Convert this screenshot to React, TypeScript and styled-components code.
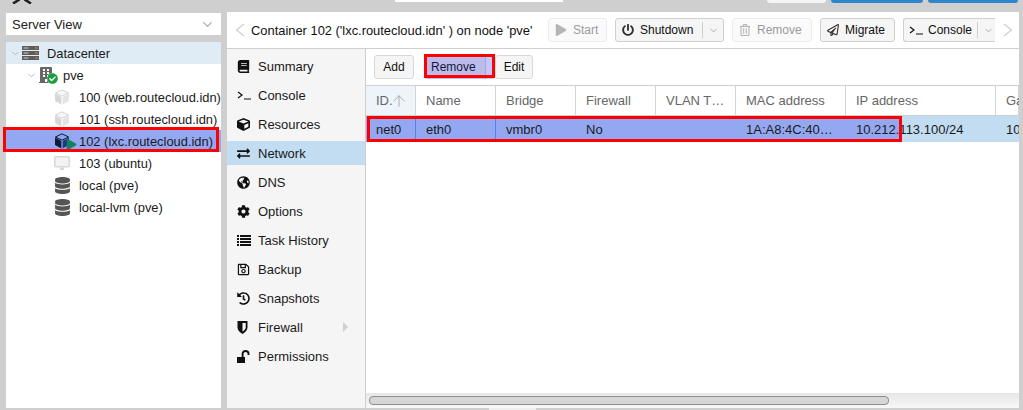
import React from 'react';
import styled, { createGlobalStyle } from 'styled-components';
import { LuChevronDown, LuArrowUp } from 'react-icons/lu';
import {
  FaBook,
  FaCube,
  FaExchangeAlt,
  FaGlobeAmericas,
  FaCog,
  FaRegSave,
  FaHistory,
  FaDatabase,
  FaPlay,
  FaCheckCircle,
  FaBuilding,
  FaRegPaperPlane,
  FaPowerOff,
  FaRegTrashAlt,
} from 'react-icons/fa';

const GlobalStyle = createGlobalStyle`
  html, body {
    margin: 0;
    height: 100%;
    background: #cfcfcf;
    overflow: hidden;
  }
  body {
    font-family: "Liberation Sans", Arial, sans-serif;
    font-size: 13px;
    color: #111;
  }
`;

const Page = styled.div`
  position: relative;
  width: 1023px;
  height: 410px;
  display: flex;
  flex-direction: column;
  overflow: hidden;
`;

const TopBar = styled.div`
  height: 13px;
  flex: none;
  display: flex;
  align-items: flex-start;
  padding-left: 12px;
  overflow: hidden;
`;

const Logo = styled.svg`
  width: 20px;
  height: 4px;
  flex: none;
`;

const SearchField = styled.div`
  width: 168px;
  height: 2px;
  margin-left: 363px;
  background: #fff;
  flex: none;
`;

const TopBtn = styled.div<{ $blue?: boolean; $w: number; $ml: number }>`
  width: ${(p) => p.$w}px;
  height: 3px;
  margin-left: ${(p) => p.$ml}px;
  flex: none;
  border-radius: 0 0 3px 3px;
  background: ${(p) => (p.$blue ? '#2b86cb' : '#f5f5f5')};
`;

const Body = styled.div`
  flex: 1;
  min-height: 0;
  display: flex;
  padding-left: 6px;
  gap: 6px;
`;

const LeftCol = styled.div`
  width: 215px;
  flex: none;
  display: flex;
  flex-direction: column;
  gap: 7px;
`;

const ViewSelect = styled.div`
  height: 22px;
  background: #fff;
  display: flex;
  align-items: center;
  justify-content: space-between;
  padding: 0 6px 0 6px;
  font-size: 13px;
  color: #222;
  svg {
    color: #aaa;
  }
`;

const Tree = styled.div`
  flex: 1;
  background: #fff;
  display: flex;
  flex-direction: column;
`;

const TreeRow = styled.div<{ $level: number; $tone?: 'hover' | 'picked' }>`
  height: 22px;
  flex: none;
  display: flex;
  align-items: center;
  padding-left: ${(p) => p.$level}px;
  white-space: nowrap;
  font-size: 12.9px;
  background: ${(p) =>
    p.$tone === 'hover' ? '#dfebf5' : p.$tone === 'picked' ? '#94a8f2' : 'transparent'};
  color: #1a1a1a;
`;

const Twist = styled.span`
  width: 12px;
  flex: none;
  display: flex;
  color: #b5b5b5;
`;

const TreeIcon = styled.span`
  width: 25px;
  height: 16px;
  flex: none;
  position: relative;
  display: flex;
  align-items: center;
`;

const Badge = styled.span<{ $color: string; $size: number; $right: number }>`
  position: absolute;
  right: ${(p) => p.$right}px;
  bottom: -1px;
  display: flex;
  font-size: ${(p) => p.$size}px;
  color: ${(p) => p.$color};
  background: #fff;
  border-radius: 50%;
`;

const PlayBadge = styled(Badge)`
  background: transparent;
  border-radius: 0;
`;

const Highlight = styled.div`
  position: absolute;
  box-sizing: border-box;
  border: 3px solid #ff0000;
  pointer-events: none;
  z-index: 3;
`;

const TreeMark = styled(Highlight)`
  left: 3px;
  top: 127px;
  width: 216px;
  height: 25px;
`;

const RemoveMark = styled(Highlight)`
  left: 424px;
  top: 54px;
  width: 71px;
  height: 24px;
`;

const RowMark = styled(Highlight)`
  left: 367px;
  top: 116px;
  width: 535px;
  height: 26px;
`;

const Main = styled.div`
  flex: 1;
  min-width: 0;
  display: flex;
  flex-direction: column;
  background: #fff;
  margin-right: 4px;
  margin-top: -1px;
`;

const Head = styled.div`
  height: 36px;
  flex: none;
  display: flex;
  align-items: center;
  border-bottom: 1px solid #cfcfcf;
  padding-left: 2px;
`;

const Arrow = styled.span<{ $w: number; $pad: number }>`
  width: ${(p) => p.$w}px;
  padding-left: ${(p) => p.$pad}px;
  box-sizing: border-box;
  flex: none;
  display: flex;
`;

const Title = styled.div`
  width: 297px;
  flex: none;
  white-space: nowrap;
  font-size: 12.9px;
  color: #111;
`;

const Actions = styled.div`
  display: flex;
  align-items: center;
  gap: 8px;
  flex: 1;
  min-width: 0;
`;

const ActionBtn = styled.div<{ $off?: boolean; $w: number; $open?: boolean }>`
  width: ${(p) => p.$w}px;
  height: 24px;
  box-sizing: border-box;
  flex: none;
  display: flex;
  align-items: center;
  gap: 5px;
  padding-left: 5px;
  overflow: hidden;
  border: 1px solid ${(p) => (p.$off ? '#ececec' : '#cfcfcf')};
  ${(p) => (p.$open ? 'border-right: none; border-radius: 3px 0 0 3px;' : 'border-radius: 3px;')}
  background: ${(p) => (p.$off ? '#fafafa' : '#f5f5f5')};
  color: ${(p) => (p.$off ? '#9a9a9a' : '#111')};
  font-size: 12px;
  white-space: nowrap;
`;

const ActionIcon = styled.span<{ $off?: boolean }>`
  width: 14px;
  flex: none;
  display: flex;
  justify-content: center;
  font-size: 12px;
  color: ${(p) => (p.$off ? '#b5b5b5' : '#333')};
`;

const Caret = styled.span`
  margin-left: auto;
  height: 16px;
  width: 21px;
  flex: none;
  box-sizing: border-box;
  border-left: 1px solid #cfcfcf;
  display: flex;
  align-items: center;
  justify-content: center;
  color: #aaa;
`;

const Content = styled.div`
  flex: 1;
  min-height: 0;
  display: flex;
`;

const SideMenu = styled.div`
  width: 139px;
  box-sizing: border-box;
  flex: none;
  background: #f5f5f5;
  border-right: 1px solid #cfcfcf;
  padding-top: 5px;
`;

const MenuItem = styled.div<{ $on?: boolean }>`
  height: 24px;
  margin-bottom: 5px;
  display: flex;
  align-items: center;
  padding-left: 10px;
  position: relative;
  background: ${(p) => (p.$on ? '#c2ddf2' : 'transparent')};
  color: #1a1a1a;
  font-size: 13px;
`;

const MenuIcon = styled.span`
  width: 21px;
  flex: none;
  display: flex;
  font-size: 13px;
  color: #111;
`;

const MenuMore = styled.span`
  position: absolute;
  right: 17px;
  top: 7px;
  width: 0;
  height: 0;
  border-left: 5px solid #d0d0d0;
  border-top: 5px solid transparent;
  border-bottom: 5px solid transparent;
`;

const Panel = styled.div`
  flex: 1;
  min-width: 0;
  display: flex;
  flex-direction: column;
  overflow: hidden;
`;

const GridBar = styled.div`
  height: 37px;
  flex: none;
  display: flex;
  align-items: center;
  padding-left: 8px;
  border-bottom: 1px solid #cfcfcf;
  box-sizing: border-box;
`;

const GridBtn = styled.div<{ $w: number; $ml: number }>`
  width: ${(p) => p.$w}px;
  height: 24px;
  margin-left: ${(p) => p.$ml}px;
  flex: none;
  box-sizing: border-box;
  display: flex;
  align-items: center;
  justify-content: center;
  border: 1px solid #d8d8d8;
  border-radius: 3px;
  background: #f5f5f5;
  font-size: 12px;
  color: #111;
`;

const RemoveBtn = styled(GridBtn)`
  background: linear-gradient(
    to right,
    #bcbcea 60px,
    #a6a6d6 60px,
    #a6a6d6 61px,
    #c6c6fa 61px
  );
  justify-content: flex-start;
  padding-left: 6px;
  border-color: transparent;
  color: #14143c;
`;

const Columns = styled.div`
  height: 30px;
  flex: none;
  display: flex;
  box-sizing: border-box;
  border-bottom: 1px solid #cfcfcf;
`;

const Col = styled.div<{ $w: number; $sorted?: boolean }>`
  width: ${(p) => p.$w}px;
  flex: none;
  box-sizing: border-box;
  display: flex;
  align-items: center;
  padding-left: 10px;
  border-right: 1px solid #d4d4d4;
  background: ${(p) => (p.$sorted ? '#edf4fa' : '#fff')};
  color: #666;
  font-size: 13px;
  white-space: nowrap;
  svg {
    color: #999;
    margin-left: -3px;
    flex: none;
  }
`;

const Row = styled.div`
  height: 26px;
  flex: none;
  display: flex;
  background: linear-gradient(to right, #94a8f2 534px, #c2ddf2 534px);
`;

const Cell = styled.div<{ $w: number; $line?: boolean }>`
  width: ${(p) => p.$w}px;
  flex: none;
  box-sizing: border-box;
  display: flex;
  align-items: center;
  padding-left: 10px;
  color: #1a1a1a;
  font-size: 13px;
  white-space: nowrap;
  overflow: hidden;
  border-right: ${(p) => (p.$line ? '1px solid #5c80e0' : 'none')};
`;

const Filler = styled.div`
  flex: 1;
`;

const ScrollBar = styled.div`
  height: 15px;
  flex: none;
  background: linear-gradient(#e6e6e6, #f8f8f8);
  display: flex;
  align-items: center;
  padding-left: 3px;
`;

const Thumb = styled.div`
  width: 518px;
  height: 7px;
  border: 1px solid #8e8e8e;
  border-radius: 4px;
  background: #d6d6d6;
`;

const BottomStrip = styled.div`
  height: 2px;
  flex: none;
  padding-left: 489px;
`;

const StripTab = styled.div`
  width: 47px;
  height: 2px;
  background: #efefef;
`;

function ThinChevron({ left }: { left?: boolean }) {
  return (
    <svg width="10" height="14" viewBox="0 0 10 14" fill="none" stroke="#cbcbcb" strokeWidth="1.1">
      <path d={left ? 'M9 1L1.5 7 9 13' : 'M1 1l7.5 6L1 13'} />
    </svg>
  );
}

function ConsoleGlyph() {
  return (
    <svg width="14" height="13" viewBox="0 0 14 13" fill="none" stroke="#111" strokeWidth="1.2">
      <path d="M1 3l4 3-4 3M7 10h7" />
    </svg>
  );
}

function ListGlyph() {
  return (
    <svg width="14" height="13" viewBox="0 0 14 13" fill="#111">
      <path d="M0 1h2v2H0zM3 1h11v2H3zM0 4h2v2H0zM3 4h11v2H3zM0 7h2v2H0zM3 7h11v2H3zM0 10h2v2H0zM3 10h11v2H3z" />
    </svg>
  );
}

function ShieldGlyph() {
  return (
    <svg width="11" height="13" viewBox="0 0 11 13">
      <path d="M.5 0h10v6.5c0 3-2.5 5-5 6.5-2.5-1.5-5-3.5-5-6.5z" fill="#111" />
      <path d="M5.5 2h3.2v4.5c0 1.7-1.6 3-3.2 4z" fill="#f5f5f5" />
    </svg>
  );
}

function UnlockGlyph() {
  return (
    <svg width="13" height="13" viewBox="0 0 13 13">
      <path d="M0 7h8v6H0z" fill="#111" />
      <path d="M5.6 7V3.6C5.6 2 6.8 1 8.5 1s3 1 3 2.6V5" fill="none" stroke="#111" strokeWidth="1.9" />
    </svg>
  );
}

function ServerGlyph() {
  return (
    <svg width="17" height="14" viewBox="0 0 17 14">
      <path d="M0 0h17v4H0zM0 5h17v4H0zM0 10h17v4H0z" fill="#5c5c5c" />
      <path d="M1.5 1.5h5v1h-5zM1.5 6.5h5v1h-5zM1.5 11.5h5v1h-5z" fill="#c9c9c9" />
      <path d="M13 1.5h3v1h-3zM13 6.5h3v1h-3zM13 11.5h3v1h-3z" fill="#d08a3c" />
    </svg>
  );
}

function CubeGlyph({ dark }: { dark?: boolean }) {
  return (
    <svg width="16" height="16" viewBox="0 0 16 16">
      <path d="M1 4.6l6.4 3.4v7.5L1 12z" fill={dark ? '#0e1a3a' : '#d6d6d6'} />
      <path d="M15 4.6L8.6 8v7.5L15 12z" fill={dark ? '#1d3a80' : '#e4e4e4'} />
      <path
        d="M8 .8L14.6 4 8 7.2 1.4 4z"
        fill={dark ? '#8ea4ea' : '#f6f6f6'}
        stroke={dark ? '#0e1a3a' : '#d6d6d6'}
      />
    </svg>
  );
}

function DesktopGlyph() {
  return (
    <svg width="16" height="15" viewBox="0 0 16 15">
      <rect x="0.75" y="0.75" width="14.5" height="10" rx="1" fill="#f3f3f3" stroke="#d8d8d8" strokeWidth="1.5" />
      <path d="M6 11.5h4V14H6z" fill="#d8d8d8" />
    </svg>
  );
}

const menu = [
  ['Summary', <FaBook />],
  ['Console', <ConsoleGlyph />],
  ['Resources', <FaCube />],
  ['Network', <FaExchangeAlt />],
  ['DNS', <FaGlobeAmericas />],
  ['Options', <FaCog />],
  ['Task History', <ListGlyph />],
  ['Backup', <FaRegSave />],
  ['Snapshots', <FaHistory />],
  ['Firewall', <ShieldGlyph />],
  ['Permissions', <UnlockGlyph />],
] as const;

const columns: [string, number][] = [
  ['ID.', 50],
  ['Name', 80],
  ['Bridge', 80],
  ['Firewall', 80],
  ['VLAN T…', 80],
  ['MAC address', 110],
  ['IP address', 150],
  ['Ga', 23],
];

export default function App() {
  return (
    <Page>
      <GlobalStyle />
      <TopBar>
        <Logo viewBox="0 0 20 4">
          <path d="M1 3.5L7.5 -.5M19 3.5L12.5 -.5" stroke="#222" strokeWidth="2.6" />
        </Logo>
        <SearchField />
        <TopBtn $w={59} $ml={204} />
        <TopBtn $blue $w={92} $ml={5} />
        <TopBtn $blue $w={90} $ml={5} />
      </TopBar>
      <Body>
        <LeftCol>
          <ViewSelect>
            Server View
            <LuChevronDown size={15} />
          </ViewSelect>
          <Tree>
            <TreeRow $level={4} $tone="hover">
              <Twist>
                <LuChevronDown size={11} />
              </Twist>
              <TreeIcon>
                <ServerGlyph />
              </TreeIcon>
              Datacenter
            </TreeRow>
            <TreeRow $level={20}>
              <Twist>
                <LuChevronDown size={11} />
              </Twist>
              <TreeIcon>
                <FaBuilding color="#666" size={16} />
                <Badge $color="#1a9e3f" $size={11} $right={5}>
                  <FaCheckCircle />
                </Badge>
              </TreeIcon>
              pve
            </TreeRow>
            <TreeRow $level={48}>
              <TreeIcon>
                <CubeGlyph />
              </TreeIcon>
              100 (web.routecloud.idn)
            </TreeRow>
            <TreeRow $level={48}>
              <TreeIcon>
                <CubeGlyph />
              </TreeIcon>
              101 (ssh.routecloud.idn)
            </TreeRow>
            <TreeRow $level={48} $tone="picked">
              <TreeIcon>
                <CubeGlyph dark />
                <PlayBadge $color="#11815f" $size={11} $right={2}>
                  <FaPlay />
                </PlayBadge>
              </TreeIcon>
              102 (lxc.routecloud.idn)
            </TreeRow>
            <TreeRow $level={48}>
              <TreeIcon>
                <DesktopGlyph />
              </TreeIcon>
              103 (ubuntu)
            </TreeRow>
            <TreeRow $level={48}>
              <TreeIcon>
                <FaDatabase color="#555" size={17} />
              </TreeIcon>
              local (pve)
            </TreeRow>
            <TreeRow $level={48}>
              <TreeIcon>
                <FaDatabase color="#555" size={17} />
              </TreeIcon>
              local-lvm (pve)
            </TreeRow>
          </Tree>
        </LeftCol>
        <Main>
          <Head>
            <Arrow $w={22} $pad={6}>
              <ThinChevron left />
            </Arrow>
            <Title>Container 102 ('lxc.routecloud.idn' ) on node 'pve'</Title>
            <Actions>
              <ActionBtn $off $w={59}>
                <ActionIcon $off>
                  <FaPlay />
                </ActionIcon>
                Start
              </ActionBtn>
              <ActionBtn $w={109}>
                <ActionIcon>
                  <FaPowerOff />
                </ActionIcon>
                Shutdown
                <Caret>
                  <LuChevronDown size={11} />
                </Caret>
              </ActionBtn>
              <ActionBtn $off $w={80}>
                <ActionIcon $off>
                  <FaRegTrashAlt />
                </ActionIcon>
                Remove
              </ActionBtn>
              <ActionBtn $w={75}>
                <ActionIcon>
                  <FaRegPaperPlane />
                </ActionIcon>
                Migrate
              </ActionBtn>
              <ActionBtn $open $w={92}>
                <ActionIcon>
                  <ConsoleGlyph />
                </ActionIcon>
                Console
                <Caret>
                  <LuChevronDown size={11} />
                </Caret>
              </ActionBtn>
              <Arrow $w={10} $pad={0}>
                <ThinChevron />
              </Arrow>
            </Actions>
          </Head>
          <Content>
            <SideMenu>
              {menu.map(([label, icon]) => (
                <MenuItem key={label} $on={label === 'Network'}>
                  <MenuIcon>{icon}</MenuIcon>
                  {label}
                  {label === 'Firewall' && <MenuMore />}
                </MenuItem>
              ))}
            </SideMenu>
            <Panel>
              <GridBar>
                <GridBtn $w={40} $ml={0}>Add</GridBtn>
                <RemoveBtn $w={71} $ml={10}>Remove</RemoveBtn>
                <GridBtn $w={38} $ml={0}>Edit</GridBtn>
              </GridBar>
              <Columns>
                {columns.map(([name, w], i) => (
                  <Col key={name} $w={w} $sorted={i === 0}>
                    {name}
                    {i === 0 && <LuArrowUp size={18} strokeWidth={1} />}
                  </Col>
                ))}
              </Columns>
              <Row>
                <Cell $line $w={50}>net0</Cell>
                <Cell $line $w={80}>eth0</Cell>
                <Cell $w={80}>vmbr0</Cell>
                <Cell $w={80}>No</Cell>
                <Cell $w={80} />
                <Cell $w={110}>1A:A8:4C:40…</Cell>
                <Cell $w={150}>10.212.113.100/24</Cell>
                <Cell $w={23}>10</Cell>
              </Row>
              <Filler />
              <ScrollBar>
                <Thumb />
              </ScrollBar>
            </Panel>
          </Content>
        </Main>
      </Body>
      <BottomStrip>
        <StripTab />
      </BottomStrip>
      <TreeMark />
      <RemoveMark />
      <RowMark />
    </Page>
  );
}
